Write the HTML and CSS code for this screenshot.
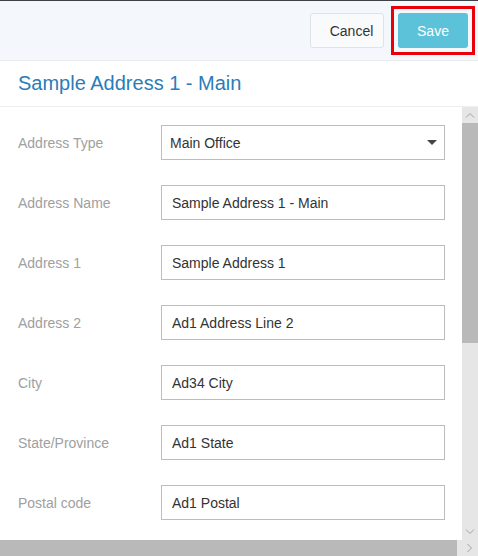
FILE: index.html
```html
<!DOCTYPE html>
<html lang="en">
<head>
    <meta charset="UTF-8">
    <meta name="viewport" content="width=device-width, initial-scale=1.0">
    <title>Edit Address</title>
    <link rel="stylesheet" href="styles.css">
</head>
<body>
    <div class="topline"></div>
    <div class="toolbar">
        <button class="btn btn-cancel">Cancel</button>
        <span class="highlight">
            <button class="btn btn-save">Save</button>
        </span>
    </div>
    <div class="title-bar">
        <h2 class="title">Sample Address 1 - Main</h2>
    </div>
    <div class="scroll-frame">
        <div class="content">
            <div class="row">
                <label class="label">Address Type</label>
                <div class="field select">
                    <span>Main Office</span>
                    <svg class="caret" width="10" height="5" viewBox="0 0 10 5"><path d="M0 0h10L5 5z" fill="#444"/></svg>
                </div>
            </div>
            <div class="row">
                <label class="label">Address Name</label>
                <input class="field" type="text" value="Sample Address 1 - Main">
            </div>
            <div class="row">
                <label class="label">Address 1</label>
                <input class="field" type="text" value="Sample Address 1">
            </div>
            <div class="row">
                <label class="label">Address 2</label>
                <input class="field" type="text" value="Ad1 Address Line 2">
            </div>
            <div class="row">
                <label class="label">City</label>
                <input class="field" type="text" value="Ad34 City">
            </div>
            <div class="row">
                <label class="label">State/Province</label>
                <input class="field" type="text" value="Ad1 State">
            </div>
            <div class="row">
                <label class="label">Postal code</label>
                <input class="field" type="text" value="Ad1 Postal">
            </div>
        </div>
        <div class="vscroll">
            <div class="sb-btn">
                <svg width="10" height="6" viewBox="0 0 10 6"><path d="M1 5.5L5 1.5L9 5.5" fill="none" stroke="#a3a3a3"/></svg>
            </div>
            <div class="vthumb"></div>
            <div class="sb-track"></div>
            <div class="sb-btn">
                <svg width="10" height="6" viewBox="0 0 10 6"><path d="M1 0.5L5 4.5L9 0.5" fill="none" stroke="#a3a3a3"/></svg>
            </div>
        </div>
        <div class="hscroll">
            <div class="hthumb"></div>
            <div class="sb-track"></div>
            <div class="sb-btn">
                <svg width="6" height="10" viewBox="0 0 6 10"><path d="M0.5 1L4.5 5L0.5 9" fill="none" stroke="#a3a3a3"/></svg>
            </div>
        </div>
    </div>
</body>
</html>
```

FILE: styles.css
```css
body {
    margin: 0;
    font-family: "Liberation Sans", Arial, sans-serif;
    font-size: 14px;
    color: #333;
    background: #fff;
    width: 478px;
    height: 556px;
    overflow: hidden;
}

.topline {
    height: 1px;
    background: #3d4247;
}

.toolbar {
    height: 59px;
    background: #f4f8fc;
    border-bottom: 1px solid #eaeef2;
    display: flex;
    justify-content: flex-end;
    align-items: center;
    gap: 7px;
    padding-right: 3px;
}

.btn {
    height: 35px;
    font-family: inherit;
    font-size: 14px;
    border-radius: 3px;
    padding: 0;
}
.btn-cancel {
    width: 74px;
    padding-left: 9px;
    background: #f8fafc;
    border: 1px solid #dfe3e8;
    color: #333;
}
.btn-save {
    display: block;
    width: 70px;
    background: #5bc2d9;
    border: none;
    color: #fff;
}
.highlight {
    display: inline-flex;
    border: 3px solid #e8000b;
    padding: 4px;
}

.title-bar {
    height: 45px;
    border-bottom: 1px solid #eee;
    display: flex;
    align-items: center;
    padding-left: 18px;
}
.title {
    margin: 0;
    font-size: 20px;
    font-weight: normal;
    color: #2b7cb9;
}

.scroll-frame {
    display: grid;
    grid-template-columns: 1fr 16px;
    grid-template-rows: 433px 16px;
}

.content {
    overflow: hidden;
    padding: 18px 0 0 18px;
}

.row {
    display: flex;
    align-items: center;
    height: 35px;
    margin-bottom: 25px;
}
.label {
    width: 143px;
    color: #a0a0a0;
}
.field {
    box-sizing: border-box;
    width: 284px;
    height: 35px;
    border: 1px solid #bdbdbd;
    padding: 0 10px;
    font-family: inherit;
    font-size: 14px;
    color: #333;
    background: #fff;
    outline: none;
}
.select {
    display: flex;
    align-items: center;
    justify-content: space-between;
    padding: 0 7px 0 8px;
}

.vscroll {
    display: flex;
    flex-direction: column;
    background: #e6e6e6;
}
.vthumb {
    height: 220px;
    background: #b9b9b9;
}
.sb-track {
    flex: 1;
}
.sb-btn {
    width: 16px;
    height: 16px;
    display: flex;
    align-items: center;
    justify-content: center;
    background: #e6e6e6;
}

.hscroll {
    grid-column: 1 / 3;
    display: flex;
    background: #e6e6e6;
}
.hthumb {
    width: 457px;
    background: #b9b9b9;
}
```
